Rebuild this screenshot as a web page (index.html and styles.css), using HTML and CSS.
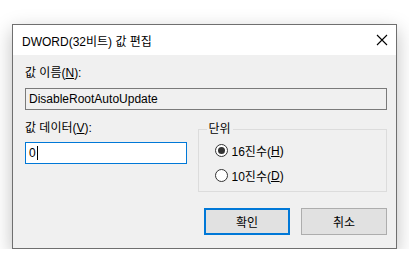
FILE: index.html
```html
<!DOCTYPE html>
<html lang="ko">
<head>
    <meta charset="utf-8">
    <title>DWORD(32비트) 값 편집</title>
    <link rel="stylesheet" href="styles.css">
</head>
<body>
    <div class="dialog">
        <div class="titlebar">
            <span class="title">DWORD(32비트) 값 편집</span>
            <svg class="close" width="12" height="12" viewBox="0 0 12 12">
                <path d="M1 1L11 11M11 1L1 11" stroke="#000" stroke-width="1.1" fill="none"/>
            </svg>
        </div>
        <div class="content">
            <label class="label">값 이름(<u>N</u>):</label>
            <div class="field readonly">DisableRootAutoUpdate</div>

            <div class="row">
                <div class="data">
                    <label class="label">값 데이터(<u>V</u>):</label>
                    <div class="field active">0<span class="caret"></span></div>
                </div>
                <fieldset class="group">
                    <legend>단위</legend>
                    <div class="radio"><span class="dot checked"></span>16진수(<u>H</u>)</div>
                    <div class="radio"><span class="dot"></span>10진수(<u>D</u>)</div>
                </fieldset>
            </div>

            <div class="buttons">
                <button class="btn default">확인</button>
                <button class="btn">취소</button>
            </div>
        </div>
    </div>
</body>
</html>
```
FILE: styles.css
```css
* {
    box-sizing: border-box;
}

body {
    margin: 0;
    padding: 24px 13px 0 12px;
    background: #fff;
    font-family: "Liberation Sans", "Noto Sans CJK KR", sans-serif;
    font-size: 12px;
    color: #000;
}

/* 창 */
.dialog {
    width: 385px;
    height: 225px;
    border: 1px solid #6f6f6f;
    background: #f0f0f0;
    box-shadow: 0 6px 18px rgba(0, 0, 0, 0.25);
    display: flex;
    flex-direction: column;
}

.titlebar {
    height: 30px;
    background: #fff;
    display: flex;
    align-items: center;
    justify-content: space-between;
    padding: 0 8px 0 9px;
    flex-shrink: 0;
}

.title {
    font-size: 12px;
    padding-top: 1px;
}

.content {
    padding: 9px 9px 0 12px;
    display: flex;
    flex-direction: column;
}

.label {
    display: block;
    height: 19px;
    line-height: 19px;
}

.field {
    height: 22px;
    line-height: 20px;
    padding: 0 3px;
    border: 1px solid #7a7a7a;
}

.field.readonly {
    margin-top: 5px;
    background: #f0f0f0;
}

.field.active {
    margin-top: 4px;
    background: #fff;
    border-color: #0078d7;
}

.caret {
    display: inline-block;
    width: 1px;
    height: 14px;
    background: #000;
    vertical-align: -3px;
    margin-left: 1px;
}

.row {
    display: flex;
    margin-top: 9px;
}

.data {
    width: 162px;
}

/* 그룹 상자 */
.group {
    margin: 3px 0 0 11px;
    padding: 2px 0 0 16px;
    border: 1px solid #dcdcdc;
    width: 190px;
    height: 70px;
}

.group legend {
    padding: 0 2px;
    margin-left: -8px;
    line-height: 14px;
}

.radio {
    display: flex;
    align-items: center;
    height: 25px;
}

.dot {
    width: 13px;
    height: 13px;
    border: 1px solid #333;
    border-radius: 50%;
    background: #fff;
    margin-right: 4px;
    display: flex;
    align-items: center;
    justify-content: center;
}

.dot.checked::after {
    content: "";
    width: 7px;
    height: 7px;
    border-radius: 50%;
    background: #333;
}

/* 버튼 */
.buttons {
    display: flex;
    justify-content: flex-end;
    gap: 11px;
    margin-top: 16px;
}

.btn {
    width: 86px;
    height: 27px;
    font-family: inherit;
    font-size: 12px;
    background: #e1e1e1;
    border: 1px solid #adadad;
    padding: 0;
}

.btn.default {
    border: 2px solid #0078d7;
}
```
